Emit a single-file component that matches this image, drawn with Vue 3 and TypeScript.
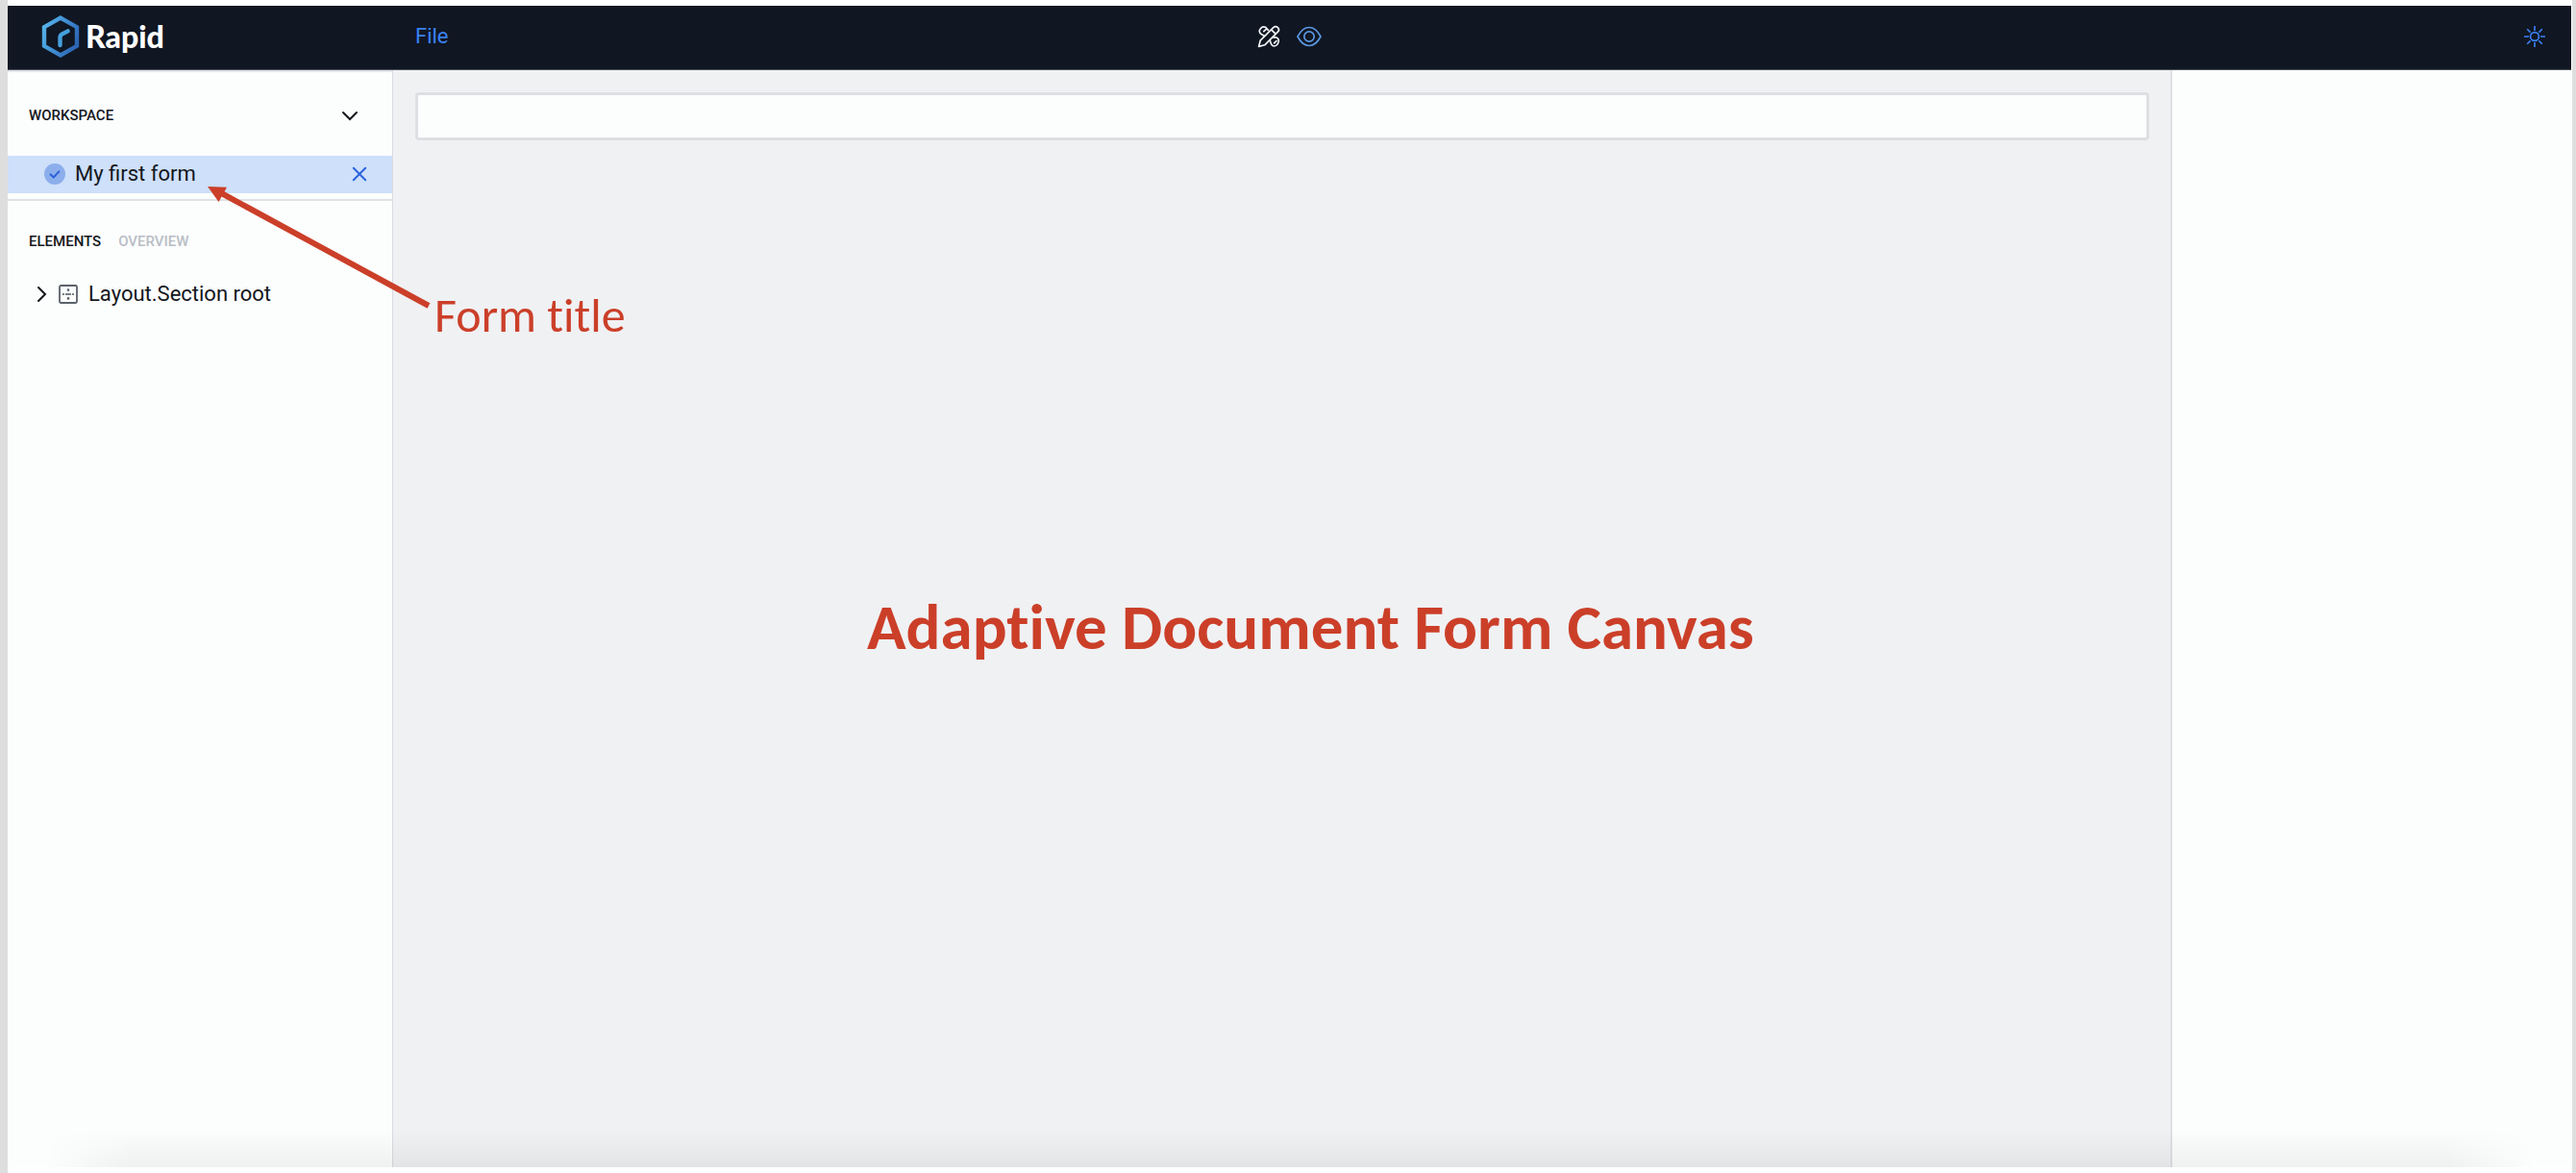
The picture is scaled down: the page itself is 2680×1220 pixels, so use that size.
<script setup lang="ts">
import { ref } from 'vue'

const tabs = ['Elements', 'Overview']
const activeTab = ref('Elements')
const workspaceOpen = ref(true)
const forms = ref(['My first form'])
const expression = ref('')

function closeForm(name: string) {
  forms.value = forms.value.filter((form) => form !== name)
}
</script>

<template>
  <div class="page">
    <header class="topbar">
      <div class="topbar-start">
        <a class="brand" href="#">
          <svg class="brand-mark" viewBox="0 0 40 44" aria-hidden="true">
            <defs>
              <linearGradient id="brand-shade" x1="0" y1="0.2" x2="1" y2="0.7">
                <stop offset="0" stop-color="#54b2e8" />
                <stop offset="0.5" stop-color="#3f8dd2" />
                <stop offset="1" stop-color="#2b65b4" />
              </linearGradient>
            </defs>
            <path d="M20 2.6 37 12.2V31.8L20 41.4 3 31.8V12.2Z" fill="none" stroke="url(#brand-shade)" stroke-width="4.4" />
            <path d="M19.5 31V22.8Q19.5 20.4 21.6 19.4L27.6 16.4" fill="none" stroke="#46a0dd" stroke-width="4.4" stroke-linecap="round" />
          </svg>
          <span>Rapid</span>
        </a>
        <button class="menu" type="button">File</button>
      </div>
      <div class="tools">
        <button type="button" class="tool" aria-label="Design">
          <svg width="24" height="24" viewBox="0 0 24 24" fill="none" stroke="#f4f6fa" stroke-width="1.7" stroke-linejoin="round" stroke-linecap="round">
            <path d="M1.6 22.4 3.2 16.2 16.8 2.6A3.2 3.2 0 0 1 21.4 7.2L7.8 20.8Z" />
            <path d="M14.6 4.8 19.2 9.4" />
            <path d="M7.6 11.4 4.6 9.8Q1.2 7.6 2.8 4.6 5 .8 8.4 2.2L11.4 5.4M8.8 4.8 6.8 6.6" />
            <path d="M16.4 12.8H19.4Q22.8 14 22.2 17.4 21 21.8 17.4 22 14.4 21.8 13.4 16.4M20 16.6 17.6 18.8" />
          </svg>
        </button>
        <button type="button" class="tool" aria-label="Preview">
          <svg width="26" height="24" viewBox="0 0 26 24" fill="none" stroke="#5a97e0" stroke-width="1.7">
            <path d="M1 12Q6 2.5 13 2.5T25 12Q20 21.5 13 21.5T1 12Z" />
            <circle cx="13" cy="12" r="5.2" />
          </svg>
        </button>
      </div>
      <div class="topbar-end">
        <button type="button" class="tool" aria-label="Toggle theme">
          <svg width="24" height="24" viewBox="0 0 24 24" fill="none" stroke="#3b82f6" stroke-width="1.6">
            <circle cx="12" cy="12" r="4.4" />
            <path d="M12 1v5M12 18v5M1 12h5M18 12h5M4.2 4.2l3.4 3.4M16.4 16.4l3.4 3.4M4.2 19.8l3.4-3.4M16.4 7.6l3.4-3.4" />
          </svg>
        </button>
      </div>
    </header>

    <div class="body">
      <aside class="sidebar">
        <section class="workspace">
          <div class="workspace-head">
            <h2>Workspace</h2>
            <button type="button" class="icon-button" aria-label="Toggle workspace" @click="workspaceOpen = !workspaceOpen">
              <svg width="22" height="22" viewBox="0 0 22 22" fill="none" stroke="#14171c" stroke-width="2" stroke-linecap="round">
                <path d="M4 8l7 7 7-7" />
              </svg>
            </button>
          </div>
          <ul v-if="workspaceOpen" class="forms">
            <li v-for="form in forms" :key="form" class="form-row">
              <svg width="22" height="22" viewBox="0 0 22 22" aria-hidden="true">
                <circle cx="11" cy="11" r="11" fill="#8caeec" />
                <path d="M6.6 11.4 9.8 14.4 15.4 8.4" fill="none" stroke="#2a5fd6" stroke-width="2" stroke-linecap="round" />
              </svg>
              <span class="form-name">{{ form }}</span>
              <button type="button" class="icon-button" :aria-label="`Close ${form}`" @click="closeForm(form)">
                <svg width="22" height="22" viewBox="0 0 22 22" fill="none" stroke="#2b63dc" stroke-width="2" stroke-linecap="round">
                  <path d="M4.8 4.8 17.2 17.2M17.2 4.8 4.8 17.2" />
                </svg>
              </button>
            </li>
          </ul>
        </section>

        <nav class="tabs">
          <button
            v-for="tab in tabs"
            :key="tab"
            type="button"
            :class="['tab', { active: tab === activeTab }]"
            @click="activeTab = tab"
          >
            {{ tab }}
          </button>
        </nav>

        <div class="tree-row">
          <button type="button" class="icon-button" aria-label="Expand">
            <svg width="22" height="22" viewBox="0 0 22 22" fill="none" stroke="#14171c" stroke-width="2" stroke-linecap="round">
              <path d="M8 4l7 7-7 7" />
            </svg>
          </button>
          <svg width="20" height="20" viewBox="0 0 20 20" aria-hidden="true">
            <rect x="1" y="1" width="18" height="18" rx="1.5" fill="none" stroke="#5b626b" stroke-width="1.8" />
            <g fill="#5b626b">
              <circle cx="5" cy="10" r="1.1" />
              <circle cx="8" cy="10" r="1.1" />
              <circle cx="12" cy="10" r="1.1" />
              <circle cx="15" cy="10" r="1.1" />
              <circle cx="10" cy="5.6" r="1.3" />
              <circle cx="10" cy="10" r="1.1" />
              <circle cx="10" cy="14.4" r="1.3" />
            </g>
          </svg>
          <span>Layout.Section root</span>
        </div>
      </aside>

      <main class="canvas">
        <input v-model="expression" class="canvas-input" type="text" aria-label="Form section" />
      </main>

      <aside class="inspector"></aside>
    </div>

    <svg class="arrow" width="240" height="136" viewBox="0 0 240 136" aria-hidden="true">
      <path d="M14 7.5 236 128" stroke="#cb3f29" stroke-width="6" />
      <path d="M6 4 26 4.7 17.5 20Z" fill="#cb3f29" />
    </svg>
    <p class="note">Form title</p>
    <p class="caption">Adaptive Document Form Canvas</p>
  </div>
</template>

<style>
body {
  margin: 0;
  background: #fff;
}
</style>

<style scoped>
.page {
  position: relative;
  box-sizing: border-box;
  min-height: 100vh;
  display: flex;
  flex-direction: column;
  padding: 6px 0;
  border-left: 8px solid #dedede;
  border-right: 4px solid #dedede;
  font-family: Roboto, 'Liberation Sans', sans-serif;
  font-size: 22px;
  line-height: 26px;
  color: #14171c;
}

button {
  padding: 0;
  border: 0;
  background: none;
  font: inherit;
  cursor: pointer;
}

svg {
  display: block;
  flex: none;
}

.topbar {
  display: grid;
  grid-template-columns: 1fr auto 1fr;
  align-items: center;
  box-sizing: border-box;
  height: 67px;
  margin-right: 1px;
  padding-bottom: 2px;
  background: #101622;
  border-bottom: 1px solid #4b505b;
}

.topbar-start {
  display: flex;
  align-items: center;
}

.brand {
  display: flex;
  align-items: center;
  gap: 6px;
  box-sizing: border-box;
  width: 424px;
  padding-left: 35px;
  color: #fff;
  font-family: Lato, sans-serif;
  font-size: 32px;
  line-height: 40px;
  font-weight: 900;
  text-decoration: none;
}

.brand-mark {
  width: 40px;
  height: 44px;
}

.menu {
  color: #3b82f6;
}

.tools {
  display: flex;
  align-items: center;
  gap: 17px;
}

.topbar-end {
  display: flex;
  justify-content: flex-end;
  padding-right: 26px;
}

.body {
  position: relative;
  flex: 1;
  display: flex;
}

.body::after {
  content: '';
  position: absolute;
  inset: auto 0 0;
  height: 40px;
  background: linear-gradient(transparent, rgba(0, 0, 0, 0.05));
  mask-image: linear-gradient(90deg, transparent 40px, #000 130px, #000 calc(100% - 130px), transparent calc(100% - 40px));
  pointer-events: none;
}

.sidebar {
  flex: none;
  box-sizing: border-box;
  width: 401px;
  border-right: 1px solid #d9dbe0;
  background: #fcfdfd;
}

.workspace {
  padding-bottom: 6px;
  border-top: 2px solid #e3e5e8;
  border-bottom: 2px solid #dfe1e5;
}

.workspace-head {
  display: flex;
  align-items: center;
  justify-content: space-between;
  box-sizing: border-box;
  height: 87px;
  padding: 2px 33px 0 22px;
}

h2,
.tab {
  margin: 0;
  font-size: 15px;
  line-height: 20px;
  font-weight: 500;
  text-transform: uppercase;
}

.forms {
  margin: 0;
  padding: 0;
  list-style: none;
}

.form-row {
  display: flex;
  align-items: center;
  gap: 10px;
  box-sizing: border-box;
  height: 39px;
  padding: 0 23px 2px 38px;
  background: #cee0fa;
}

.form-name {
  flex: 1;
}

.tabs {
  display: flex;
  align-items: center;
  gap: 18px;
  height: 84px;
  padding-left: 22px;
}

.tab {
  color: #b9bdc5;
}

.tab.active {
  color: #14171c;
}

.tree-row {
  display: flex;
  align-items: center;
  gap: 7px;
  padding-left: 24px;
}

.tree-row span {
  padding-left: 4px;
}

.canvas {
  flex: 1;
  min-width: 0;
  padding: 23px 22px 23px 23px;
  background: #f0f1f3;
}

.canvas-input {
  display: block;
  box-sizing: border-box;
  width: 100%;
  height: 50px;
  padding: 0 12px;
  border: 3px solid #dddfe3;
  border-radius: 4px;
  background: #fcfdfd;
  font: inherit;
}

.inspector {
  flex: none;
  box-sizing: border-box;
  width: 418px;
  border-left: 2px solid #dfe0e4;
  background: #fcfdfd;
}

.arrow {
  position: absolute;
  left: 202px;
  top: 190px;
}

.note,
.caption {
  position: absolute;
  margin: 0;
  color: #cb3f29;
  font-family: Calibri, Carlito, Lato, sans-serif;
  font-variant-ligatures: none;
  white-space: nowrap;
}

.note {
  left: 444px;
  top: 300px;
  font-size: 50px;
  line-height: 56px;
}

.caption {
  left: 894px;
  top: 616px;
  font-size: 67px;
  line-height: 72px;
  font-weight: 700;
}
</style>
